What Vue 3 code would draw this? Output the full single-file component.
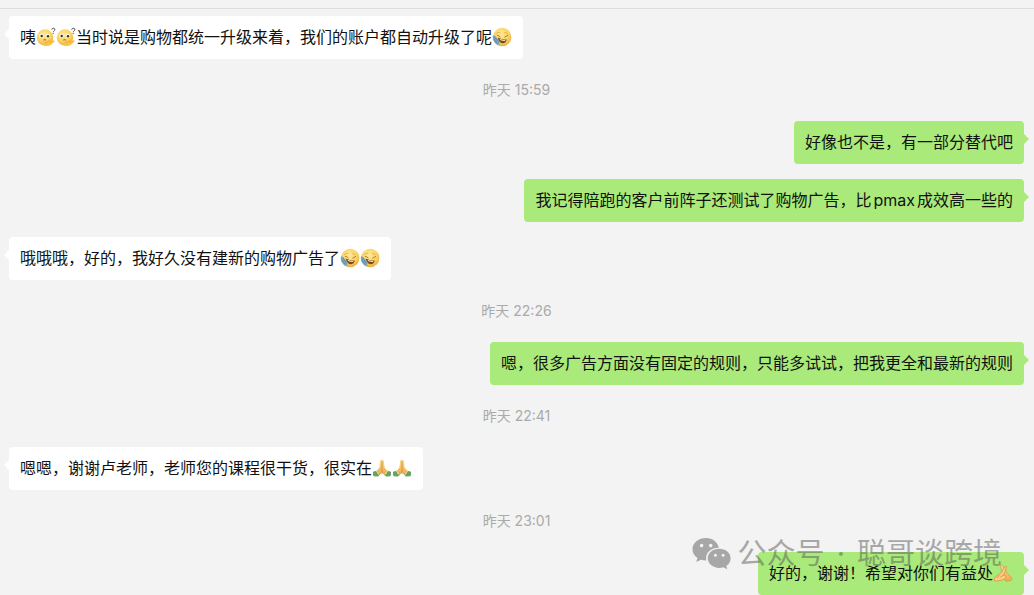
<script setup>
const entries = [
  { id: 1, from: 'them', parts: [{ t: '咦' }, { e: 'puzzled' }, { e: 'puzzled' }, { t: '当时说是购物都统一升级来着，我们的账户都自动升级了呢' }, { e: 'facepalm' }] },
  { id: 2, time: '昨天 15:59' },
  { id: 3, from: 'me', parts: [{ t: '好像也不是，有一部分替代吧' }] },
  { id: 4, from: 'me', parts: [{ t: '我记得陪跑的客户前阵子还测试了购物广告，比' }, { latin: 'pmax' }, { t: '成效高一些的' }] },
  { id: 5, from: 'them', parts: [{ t: '哦哦哦，好的，我好久没有建新的购物广告了' }, { e: 'facepalm' }, { e: 'facepalm' }] },
  { id: 6, time: '昨天 22:26' },
  { id: 7, from: 'me', parts: [{ t: '嗯，很多广告方面没有固定的规则，只能多试试，把我更全和最新的规则' }] },
  { id: 8, time: '昨天 22:41' },
  { id: 9, from: 'them', parts: [{ t: '嗯嗯，谢谢卢老师，老师您的课程很干货，很实在' }, { e: 'pray' }, { e: 'pray' }] },
  { id: 10, time: '昨天 23:01' },
  { id: 11, from: 'me', parts: [{ t: '好的，谢谢！希望对你们有益处' }, { e: 'salute' }] },
]
</script>

<template>
  <main class="chat">
    <svg class="defs" aria-hidden="true">
      <defs>
        <radialGradient id="face" cx="0.45" cy="0.35" r="0.7">
          <stop offset="0" stop-color="#ffea9a" />
          <stop offset="0.6" stop-color="#fad262" />
          <stop offset="1" stop-color="#e5a63e" />
        </radialGradient>
        <linearGradient id="skin" x1="0" y1="0" x2="0" y2="1">
          <stop offset="0" stop-color="#ffdf8c" />
          <stop offset="1" stop-color="#f0a94c" />
        </linearGradient>
        <symbol id="puzzled" viewBox="0 0 20 20">
          <circle cx="9" cy="10.5" r="8.2" fill="url(#face)" />
          <circle cx="5.4" cy="8.8" r="2.2" fill="#fff8df" />
          <circle cx="11.8" cy="9" r="2.2" fill="#fff8df" />
          <circle cx="5.7" cy="9" r="1.2" fill="#3c3020" />
          <circle cx="12" cy="9.2" r="1.2" fill="#3c3020" />
          <path d="M7.6 12.9q1.2-.6 2.2 0" fill="none" stroke="#805022" stroke-width=".9" stroke-linecap="round" />
          <path d="M7.4 15.4c2.6.4 4.6-.4 6.2-2.4 1-.9 2.1-.1 1.6 1l2-.8c1.5-.2 1.9 1 1 1.9l-3.6 2.9c-2.4 1.5-5 1.1-7-.1z" fill="#fbc343" />
          <path d="M13.6 13.2q-1.5 2.2-4.4 2.4M15.2 14l-1.4 1.5" fill="none" stroke="#dd9130" stroke-width=".6" stroke-linecap="round" />
          <path d="M15.8 2.3q.4-1.2 1.6-1.1 1.6.2 1.4 1.6-.1.6-.8 1.1-.7.4-.7 1M17.2 6.5v.2" fill="none" stroke="#484848" stroke-width="1" stroke-linecap="round" />
        </symbol>
        <symbol id="facepalm" viewBox="0 0 20 20">
          <circle cx="10.2" cy="10" r="9.2" fill="url(#face)" />
          <path d="M4.6 6.4q1.6-1.6 3.3-.9M12.6 5.6q1.8-.3 2.8 1" fill="none" stroke="#dfa544" stroke-width=".8" stroke-linecap="round" />
          <path d="M5.4 8.3q1.6.2 2.7 1.4M12.8 10l2.9-1.5" fill="none" stroke="#a8702c" stroke-width=".9" stroke-linecap="round" />
          <path d="M5.8 10.4q4.4 2.5 9 2-.8 3.6-4.2 3.8-3.9-.5-4.8-5.8z" fill="#78491f" />
          <path d="M7.6 11.8q3 1.3 5.9 1l-.5 1.1q-2.8.3-4.9-.8z" fill="#f6dda0" />
          <path d="M.8 8.8c1.4-.6 2.5.1 3.2 1.2l3.8 4.6c.6.9-.2 1.5-.9.9l.7 1.5c.2.8-.6 1.1-1.2.6l-.4.6C3.6 17.2 1.2 14.6.8 11z" fill="#7ba6bd" />
          <path d="M2.8 10l3.5 4.6M2.1 12.2l3 4" stroke="#5584a0" stroke-width=".7" stroke-linecap="round" />
        </symbol>
        <symbol id="pray" viewBox="0 0 20 20">
          <path d="M1 13.8l4.4-1.3 3 3.8-2.5 2.3-4.4-.4q-.9-2-.5-4.4zM19 13.8l-4.4-1.3-3 3.8 2.5 2.3 4.4-.4q.9-2 .5-4.4z" fill="#65a35b" />
          <path d="M9.8 1.8c-1.1-.4-1.6.3-1.7 1.6l-.7 6-2.8 3.8 2 3.2 3.4-1zM10.2 1.8c1.1-.4 1.6.3 1.7 1.6l.7 6 2.8 3.8-2 3.2-3.4-1z" fill="url(#skin)" />
          <path d="M10 2.8v12" stroke="#c08235" stroke-width=".8" />
          <path d="M4.4 12.9l2.4 3.8M15.6 12.9l-2.4 3.8" stroke="#ece3ae" stroke-width="1" />
        </symbol>
        <symbol id="salute" viewBox="0 0 20 20">
          <path d="M7.2 1.8c.9-.7 1.7.1 2.2.9l5.2 7.6 4 4.5c.9 1.4.1 2.5-1.4 2.8l-4.4.6-3.2-5.4z" fill="url(#skin)" stroke="#d68a42" stroke-width=".6" />
          <path d="M12.2 3.2c1-.5 1.6.4 1.2 1.3l-2.6 7.5q1.4-.4 1.9.7.6 2.3-1.4 3.4l-4.3 1.6-4.6.3q-1.8-.2-1.4-1.8l2.2-3.1 4.3-2.6z" fill="#fdcf83" stroke="#d68a42" stroke-width=".7" />
          <path d="M10.8 12l-3.1 1.8M6 12.8l-1.9 2" stroke="#c87934" stroke-width=".7" stroke-linecap="round" />
        </symbol>
      </defs>
    </svg>

    <div class="top-edge"></div>
    <section class="messages" aria-label="聊天记录">
      <template v-for="item in entries" :key="item.id">
        <time v-if="item.time" class="stamp">{{ item.time }}</time>
        <p v-else class="bubble" :class="item.from">
          <template v-for="(part, i) in item.parts" :key="i">
            <svg v-if="part.e" class="emoji" aria-hidden="true"><use :href="'#' + part.e" /></svg>
            <span v-else-if="part.latin" class="latin">{{ part.latin }}</span>
            <span v-else>{{ part.t }}</span>
          </template>
        </p>
      </template>
    </section>

    <div class="watermark">
      <svg class="wechat" viewBox="0 0 40 34" aria-hidden="true">
        <path fill-rule="evenodd" d="M14 1C6.3 1 .5 5.9.5 12.3c0 3.7 1.9 6.8 5 8.8l-1.3 4 4.8-2.4c1.7.5 3.4.8 5.4.8-.2-.8-.3-1.6-.3-2.4 0-6 5.4-10.4 12.7-10.4C25.7 5 20.6 1 14 1zM9.6 6.8a1.8 1.8 0 1 1 0 3.6 1.8 1.8 0 0 1 0-3.6zm9.1 0a1.8 1.8 0 1 1 0 3.6 1.8 1.8 0 0 1 0-3.6z" />
        <path fill-rule="evenodd" d="M27.3 11.8c-6.4 0-11.5 4.1-11.5 9.5s5.1 9.6 11.5 9.6c1.4 0 2.8-.2 4-.6l4 2-1-3.3c2.7-1.8 4.3-4.5 4.3-7.7 0-5.4-5-9.5-11.3-9.5zm-3.9 4.9a1.5 1.5 0 1 1 0 3 1.5 1.5 0 0 1 0-3zm7.7 0a1.5 1.5 0 1 1 0 3 1.5 1.5 0 0 1 0-3z" />
      </svg>
      <span class="account"><span>公众号</span><span>·</span><span>聪哥谈跨境</span></span>
    </div>
  </main>
</template>

<style>
body {
  margin: 0;
  background: #f3f3f3;
}
</style>

<style scoped>
.chat {
  position: relative;
  font-family: Inter, "Noto Sans CJK SC", sans-serif;
  color: #111;
}
.defs {
  position: absolute;
  width: 0;
  height: 0;
}
.top-edge {
  height: 8px;
  border-bottom: 1px solid #dedede;
}
.messages {
  display: flex;
  flex-direction: column;
  padding: 7px 10px 0 9px;
}
.bubble {
  position: relative;
  display: flex;
  align-items: center;
  box-sizing: border-box;
  min-height: 43px;
  margin: 0;
  padding: 8px 11px 10px;
  border-radius: 4px;
  font-size: 16px;
  line-height: 24px;
}
.bubble + .bubble {
  margin-top: 15px;
}
.bubble::after {
  content: "";
  position: absolute;
  top: 13px;
  border: 5px solid transparent;
}
.them {
  align-self: flex-start;
  background: #fff;
}
.them::after {
  right: 100%;
  border-right-color: #fff;
  border-left-width: 0;
}
.me {
  align-self: flex-end;
  background: #a9ea7a;
}
.me::after {
  left: 100%;
  border-left-color: #a9ea7a;
  border-right-width: 0;
}
.emoji {
  flex: none;
  width: 20px;
  height: 20px;
}
.latin {
  margin: 0 2px;
}
.stamp {
  align-self: center;
  padding: 21px 0;
  font-size: 14px;
  line-height: 20px;
  color: #aaa;
}
.watermark {
  position: absolute;
  right: 32px;
  bottom: 21px;
  display: flex;
  align-items: center;
  gap: 6px;
  font-size: 29px;
  line-height: 40px;
  color: #555;
  opacity: 0.48;
  pointer-events: none;
}
.account {
  display: flex;
  gap: 12px;
}
.wechat {
  width: 40px;
  height: 34px;
  fill: currentColor;
}
</style>
